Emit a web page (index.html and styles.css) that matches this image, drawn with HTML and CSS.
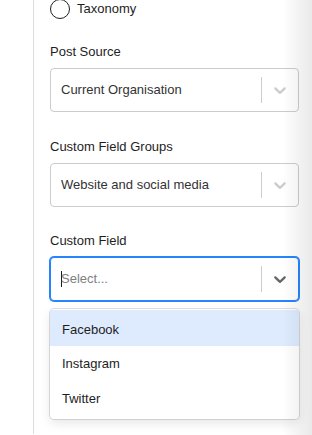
FILE: index.html
```html
<!DOCTYPE html>
<html>
<head>
<meta charset="utf-8">
<link rel="stylesheet" href="styles.css">
</head>
<body>
<div class="page">
  <div class="panel">
    <label class="radio-row">
      <span class="radio"></span>
      <span class="radio-text">Taxonomy</span>
    </label>

    <div class="field">
      <div class="field-label">Post Source</div>
      <div class="control">
        <div class="value">Current Organisation</div>
        <span class="sep"></span>
        <span class="indicator">
          <svg width="20" height="20" viewBox="0 0 20 20"><path d="M4.516 7.548c0.436-0.446 1.043-0.481 1.576 0l3.908 3.747 3.908-3.747c0.533-0.481 1.141-0.446 1.574 0 0.436 0.445 0.408 1.197 0 1.615-0.406 0.418-4.695 4.502-4.695 4.502-0.217 0.223-0.502 0.335-0.787 0.335s-0.57-0.112-0.789-0.335c0 0-4.287-4.084-4.695-4.502s-0.436-1.17 0-1.615z"/></svg>
        </span>
      </div>
    </div>

    <div class="field">
      <div class="field-label">Custom Field Groups</div>
      <div class="control">
        <div class="value">Website and social media</div>
        <span class="sep"></span>
        <span class="indicator">
          <svg width="20" height="20" viewBox="0 0 20 20"><path d="M4.516 7.548c0.436-0.446 1.043-0.481 1.576 0l3.908 3.747 3.908-3.747c0.533-0.481 1.141-0.446 1.574 0 0.436 0.445 0.408 1.197 0 1.615-0.406 0.418-4.695 4.502-4.695 4.502-0.217 0.223-0.502 0.335-0.787 0.335s-0.57-0.112-0.789-0.335c0 0-4.287-4.084-4.695-4.502s-0.436-1.17 0-1.615z"/></svg>
        </span>
      </div>
    </div>

    <div class="field field-last">
      <div class="field-label">Custom Field</div>
      <div class="control control-focused">
        <div class="value placeholder"><span class="caret"></span>Select...</div>
        <span class="sep"></span>
        <span class="indicator">
          <svg width="20" height="20" viewBox="0 0 20 20"><path d="M4.516 7.548c0.436-0.446 1.043-0.481 1.576 0l3.908 3.747 3.908-3.747c0.533-0.481 1.141-0.446 1.574 0 0.436 0.445 0.408 1.197 0 1.615-0.406 0.418-4.695 4.502-4.695 4.502-0.217 0.223-0.502 0.335-0.787 0.335s-0.57-0.112-0.789-0.335c0 0-4.287-4.084-4.695-4.502s-0.436-1.17 0-1.615z"/></svg>
        </span>
      </div>
      <div class="menu">
        <div class="option option-active">Facebook</div>
        <div class="option">Instagram</div>
        <div class="option">Twitter</div>
      </div>
    </div>
  </div>
  <div class="edge-shadow"></div>
</div>
</body>
</html>
```

FILE: styles.css
```css
html, body {
  margin: 0;
  padding: 0;
  background: #ffffff;
}

body {
  font-family: "Liberation Sans", Arial, sans-serif;
  font-size: 13px;
  color: #1e1e1e;
  overflow: hidden;
}

.page {
  position: relative;
  width: 312px;
  height: 435px;
  overflow: hidden;
}

.panel {
  margin-left: 33px;
  height: 435px;
  border-left: 1px solid #dddddd;
  padding: 0 13px 0 16px;
  box-sizing: border-box;
  width: 279px;
}

.radio-row {
  display: flex;
  align-items: center;
  gap: 7px;
  margin-top: -1px;
  height: 20px;
}

.radio {
  width: 18px;
  height: 18px;
  border: 1px solid #1e1e1e;
  border-radius: 50%;
  flex: none;
}

.radio-text {
  font-size: 13px;
  line-height: 16px;
  color: #1e1e1e;
}

.field {
  margin-top: 27px;
}

.field:first-of-type {
  margin-top: 25px;
}

.field-last {
  margin-top: 26px;
}

.field-label {
  line-height: 16px;
  height: 16px;
  margin-bottom: 8px;
  color: #1e1e1e;
}

.control {
  display: flex;
  align-items: stretch;
  height: 44px;
  box-sizing: border-box;
  border: 1px solid #cccccc;
  border-radius: 4px;
  background: #ffffff;
}

.control-focused {
  border-color: #2684ff;
  box-shadow: 0 0 0 1px #2684ff;
}

.value {
  flex: 1;
  display: flex;
  align-items: center;
  padding: 0 10px;
  color: #333333;
  line-height: 16px;
  white-space: nowrap;
  overflow: hidden;
}

.placeholder {
  color: #808080;
}

.caret {
  display: inline-block;
  width: 1px;
  height: 16px;
  background: #1e1e1e;
  margin-right: -1px;
}

.sep {
  width: 1px;
  background: #cccccc;
  margin: 8px 0;
  flex: none;
}

.indicator {
  display: flex;
  align-items: center;
  padding: 8px;
  color: #cccccc;
}

.indicator svg {
  fill: currentColor;
  display: block;
}

.control-focused .indicator {
  color: #666666;
}

.menu {
  margin-top: 8px;
  background: #ffffff;
  border-radius: 4px;
  box-shadow: 0 0 0 1px rgba(0, 0, 0, 0.12), 0 4px 11px rgba(0, 0, 0, 0.1);
  padding: 1px 0 3px;
}

.option {
  height: 35px;
  display: flex;
  align-items: center;
  padding: 0 12px;
  color: #1e1e1e;
}

.option-active {
  background: #deebff;
  height: 36px;
  padding-top: 2px;
  box-sizing: border-box;
}

.edge-shadow {
  position: absolute;
  top: 0;
  right: 0;
  width: 30px;
  height: 100%;
  background: linear-gradient(to right, rgba(0, 0, 0, 0), rgba(0, 0, 0, 0.085));
  pointer-events: none;
}
```
